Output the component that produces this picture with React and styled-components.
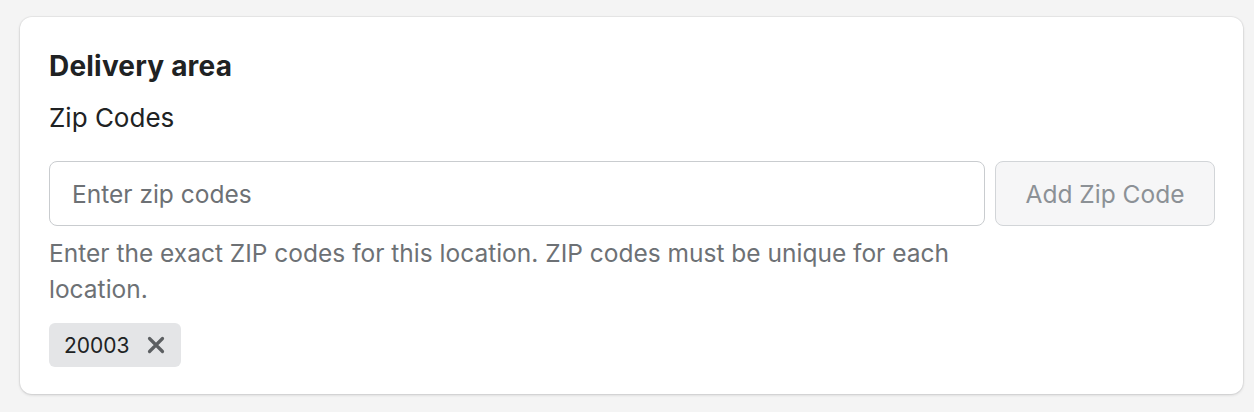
import React from 'react'
import styled, { createGlobalStyle } from 'styled-components'

const GlobalStyle = createGlobalStyle`
  body {
    margin: 0;
    background: #f4f4f4;
    font-family: Inter, "Noto Sans", sans-serif;
    -webkit-font-smoothing: antialiased;
  }
`

const Page = styled.div`
  padding: 17px 11px 18px 20px;
`

const Card = styled.section`
  background: #ffffff;
  border-radius: 12px;
  box-shadow: 0 0 0 1px rgba(63, 63, 68, 0.05), 0 1px 3px 0 rgba(63, 63, 68, 0.2);
  padding: 33px 28px 27px 29px;
`

const Title = styled.h2`
  margin: 0;
  font-size: 28px;
  line-height: 32px;
  font-weight: 700;
  letter-spacing: 0.2px;
  color: #202223;
`

const Label = styled.label`
  display: block;
  margin-top: 20px;
  font-size: 26px;
  line-height: 32px;
  color: #202223;
`

const Row = styled.div`
  display: flex;
  gap: 10px;
  margin-top: 27px;
`

const Field = styled.div`
  flex: 1;
  display: flex;
  flex-direction: column;
`

const Input = styled.input`
  box-sizing: border-box;
  height: 65px;
  width: 100%;
  border: 1px solid #c9cccf;
  border-radius: 8px;
  padding: 0 22px;
  font-family: inherit;
  font-size: 24.5px;
  color: #202223;
  outline: none;

  &::placeholder {
    color: #6d7175;
  }
`

const Button = styled.button`
  box-sizing: border-box;
  height: 65px;
  width: 220px;
  border: 1px solid #d2d5d8;
  border-radius: 8px;
  background: #f6f6f7;
  font-family: inherit;
  font-size: 24.5px;
  color: #8c9196;
`

const Help = styled.p`
  margin: 9px 0 0;
  font-size: 24.5px;
  line-height: 36px;
  color: #6d7175;
`

const Tags = styled.div`
  display: flex;
  margin-top: 16px;
`

const Tag = styled.span`
  display: inline-flex;
  align-items: center;
  gap: 17px;
  height: 44px;
  padding: 0 16px 0 15px;
  border-radius: 6px;
  background: #e4e5e7;
  font-size: 21px;
  color: #202223;
`

const Remove = styled.button`
  display: flex;
  border: 0;
  padding: 0;
  background: none;
  color: #5c5f62;
`

export default function App() {
  return (
    <Page>
      <GlobalStyle />
      <Card>
        <Title>Delivery area</Title>
        <Label>Zip Codes</Label>
        <Row>
          <Field>
            <Input placeholder="Enter zip codes" />
            <Help>
              Enter the exact ZIP codes for this location. ZIP codes must be unique for each location.
            </Help>
          </Field>
          <Button disabled>Add Zip Code</Button>
        </Row>
        <Tags>
          <Tag>
            20003
            <Remove aria-label="Remove 20003">
              <svg width="18" height="18" viewBox="0 0 18 18">
                <path d="M2.5 2.5l13 13M15.5 2.5l-13 13" stroke="currentColor" strokeWidth="3.2" strokeLinecap="round" />
              </svg>
            </Remove>
          </Tag>
        </Tags>
      </Card>
    </Page>
  )
}
